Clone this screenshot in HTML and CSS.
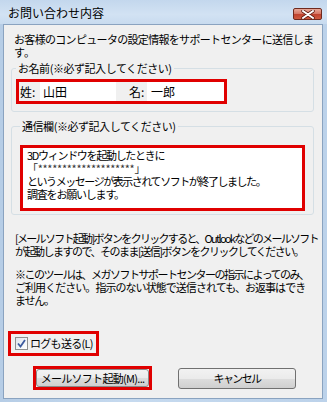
FILE: index.html
```html
<!DOCTYPE html>
<html lang="ja">
<head>
<meta charset="utf-8">
<link rel="stylesheet" href="styles.css">
</head>
<body>
<div class="window">
  <div class="titlebar">
    <span class="title">お問い合わせ内容</span>
    <span class="close">
      <svg width="14" height="9" viewBox="0 0 14 9">
        <path d="M2 1 L12 8 M12 1 L2 8" stroke="#5a1a10" stroke-width="3.4" stroke-linecap="round"/>
        <path d="M2 1 L12 8 M12 1 L2 8" stroke="#ffffff" stroke-width="2" stroke-linecap="round"/>
      </svg>
    </span>
  </div>
  <div class="client">
    <p class="intro"><span class="ln i1">お客様のコンピュータの設定情報をサポートセンターに送信しま</span><span class="ln i2">す。</span></p>

    <fieldset class="group g-name">
      <legend>お名前(※必ず記入してください)</legend>
      <div class="mark namebox">
        <span class="lbl">姓:</span>
        <span class="field f1">山田</span>
        <span class="lbl l2">名:</span>
        <span class="field f2">一郎</span>
      </div>
    </fieldset>

    <fieldset class="group g-msg">
      <legend>通信欄(※必ず記入してください)</legend>
      <div class="mark msgbox">
        <div class="memo"><span class="ln m1">3Dウィンドウを起動したときに</span><span class="ln m2">「********************」</span><span class="ln m3">というメッセージが表示されてソフトが終了しました。</span><span class="ln m4">調査をお願いします。</span></div>
      </div>
    </fieldset>

    <p class="para p1"><span class="ln a1">[メールソフト起動]ボタンをクリックすると、Outlookなどのメールソフト</span><span class="ln a2">が起動しますので、そのまま[送信]ボタンをクリックしてください。</span></p>
    <p class="para p2"><span class="ln b1l">※このツールは、メガソフトサポートセンターの指示によってのみ、</span><span class="ln b2l">ご利用ください。指示のない状態で送信されても、お返事はでき</span><span class="ln b3l">ません。</span></p>

    <div class="mark checkrow">
      <span class="check">
        <svg width="9" height="9" viewBox="0 0 9 9"><path d="M1 4.5 L3.5 7.5 L8 1" fill="none" stroke="#3c5a9e" stroke-width="1.8"/></svg>
      </span>
      <span class="checklabel">ログも送る(L)</span>
    </div>

    <div class="buttons">
      <div class="mark btnmark"><span class="btn btn-mail">メールソフト起動(M)...</span></div>
      <span class="btn btn-cancel">キャンセル</span>
    </div>
  </div>
</div>
</body>
</html>
```

FILE: styles.css
```css
* { box-sizing: border-box; }
html, body { margin: 0; padding: 0; }
body {
  width: 327px;
  height: 402px;
  overflow: hidden;
  font-family: "Noto Sans CJK JP", "Noto Sans", sans-serif;
  font-size: 11px;
  line-height: 13px;
  color: #000;
}
.window {
  width: 327px;
  height: 402px;
  background: linear-gradient(90deg, #b6cde6 0%, #c6daef 40%, #bcd2ea 100%);
  display: flex;
  flex-direction: column;
  padding: 0 4px 3px 3px;
}
.titlebar {
  height: 24px;
  flex: none;
  display: flex;
  justify-content: space-between;
  align-items: flex-start;
  background: linear-gradient(180deg, #c3d7ed 0%, #d2e2f3 60%, #c8dbef 100%);
  margin: 0 -4px 0 -3px;
  padding: 0 5px 0 8px;
}
.title {
  font-size: 12px;
  line-height: 14px;
  margin-top: 6px;
}
.close {
  margin-top: 8px;
  width: 29px;
  height: 12px;
  border: 1px solid #6f2a1e;
  border-radius: 2px;
  background: linear-gradient(180deg, #e8a898 0%, #d77a68 45%, #c0432e 55%, #cf5a3f 100%);
  display: flex;
  align-items: center;
  justify-content: center;
}
.close svg { display: block; }
.client {
  flex: 1;
  background: #f0f0f0;
  border: 1px solid #8aa3c0;
  padding: 8px 9px 0 7px;
  display: flex;
  flex-direction: column;
  align-items: flex-start;
}
p { margin: 0; }
.ln { display: block; white-space: nowrap; }
.intro { margin-left: 3px; }
.i1 { letter-spacing: -0.68px; }
.group {
  margin: 0;
  width: 303px;
  border: 1px solid #d5dfe5;
  border-radius: 3px;
  min-width: 0;
}
.group legend {
  padding: 0 2px;
  margin-left: 0;
  line-height: 13px;
  letter-spacing: -0.45px;
  white-space: nowrap;
}
.g-name {
  margin-top: 3px;
  padding: 4px 0 7px 4px;
}
.g-msg {
  margin-top: 8px;
  padding: 12px 7px 3px 8px;
}
.mark { border: 3px solid #e00000; }
.namebox {
  width: 211px;
  height: 25px;
  display: flex;
  align-items: stretch;
}
.lbl {
  display: flex;
  align-items: center;
  width: 21px;
  padding-left: 1px;
  font-size: 12px;
}
.l2 { width: 19px; margin-left: 12px; }
.field {
  background: #fff;
  display: flex;
  align-items: center;
  padding-left: 3px;
  font-size: 12px;
}
.f1 { width: 76px; }
.f2 { width: 77px; padding-left: 4px; }
.msgbox {
  width: 285px;
  height: 66px;
  background: #fff;
}
.memo {
  padding: 1px 0 0 4px;
  line-height: 13px;
}
.m1 { letter-spacing: -1.3px; }
.m2 { letter-spacing: -0.3px; color: #333; }
.m3 { letter-spacing: -1.45px; }
.m4 { letter-spacing: -1.2px; }
.para { margin-left: 4px; }
.p1 { margin-top: 17px; }
.p2 { margin-top: 10px; }
.a1 { letter-spacing: -1.7px; }
.a2 { letter-spacing: -1.5px; }
.b1l { letter-spacing: -1.5px; }
.b2l { letter-spacing: -0.95px; }
.b3l { letter-spacing: -1.2px; }
.checkrow {
  margin-top: 24px;
  margin-left: -3px;
  width: 91px;
  height: 25px;
  display: flex;
  align-items: center;
  padding-left: 4px;
}
.check {
  width: 13px;
  height: 13px;
  border: 1px solid #8e8f8f;
  background: linear-gradient(135deg, #dfe6ee, #ffffff);
  display: flex;
  align-items: center;
  justify-content: center;
  margin-right: 2px;
}
.check svg { display: block; }
.checklabel { white-space: nowrap; letter-spacing: -0.7px; }
.buttons {
  margin-top: 10px;
  display: flex;
  align-items: center;
  margin-left: 22px;
}
.btnmark {
  width: 119px;
  height: 24px;
  display: flex;
}
.btn {
  display: flex;
  align-items: center;
  justify-content: center;
  border: 1px solid #707070;
  border-radius: 3px;
  background: linear-gradient(180deg, #f2f2f2 0%, #ebebeb 50%, #dddddd 51%, #cfcfcf 100%);
  white-space: nowrap;
}
.btn-mail { flex: 1; border-color: #8a8a8a; letter-spacing: -0.7px; }
.btn-cancel {
  width: 118px;
  height: 21px;
  margin-left: 26px;
  letter-spacing: -1.6px;
}
```
